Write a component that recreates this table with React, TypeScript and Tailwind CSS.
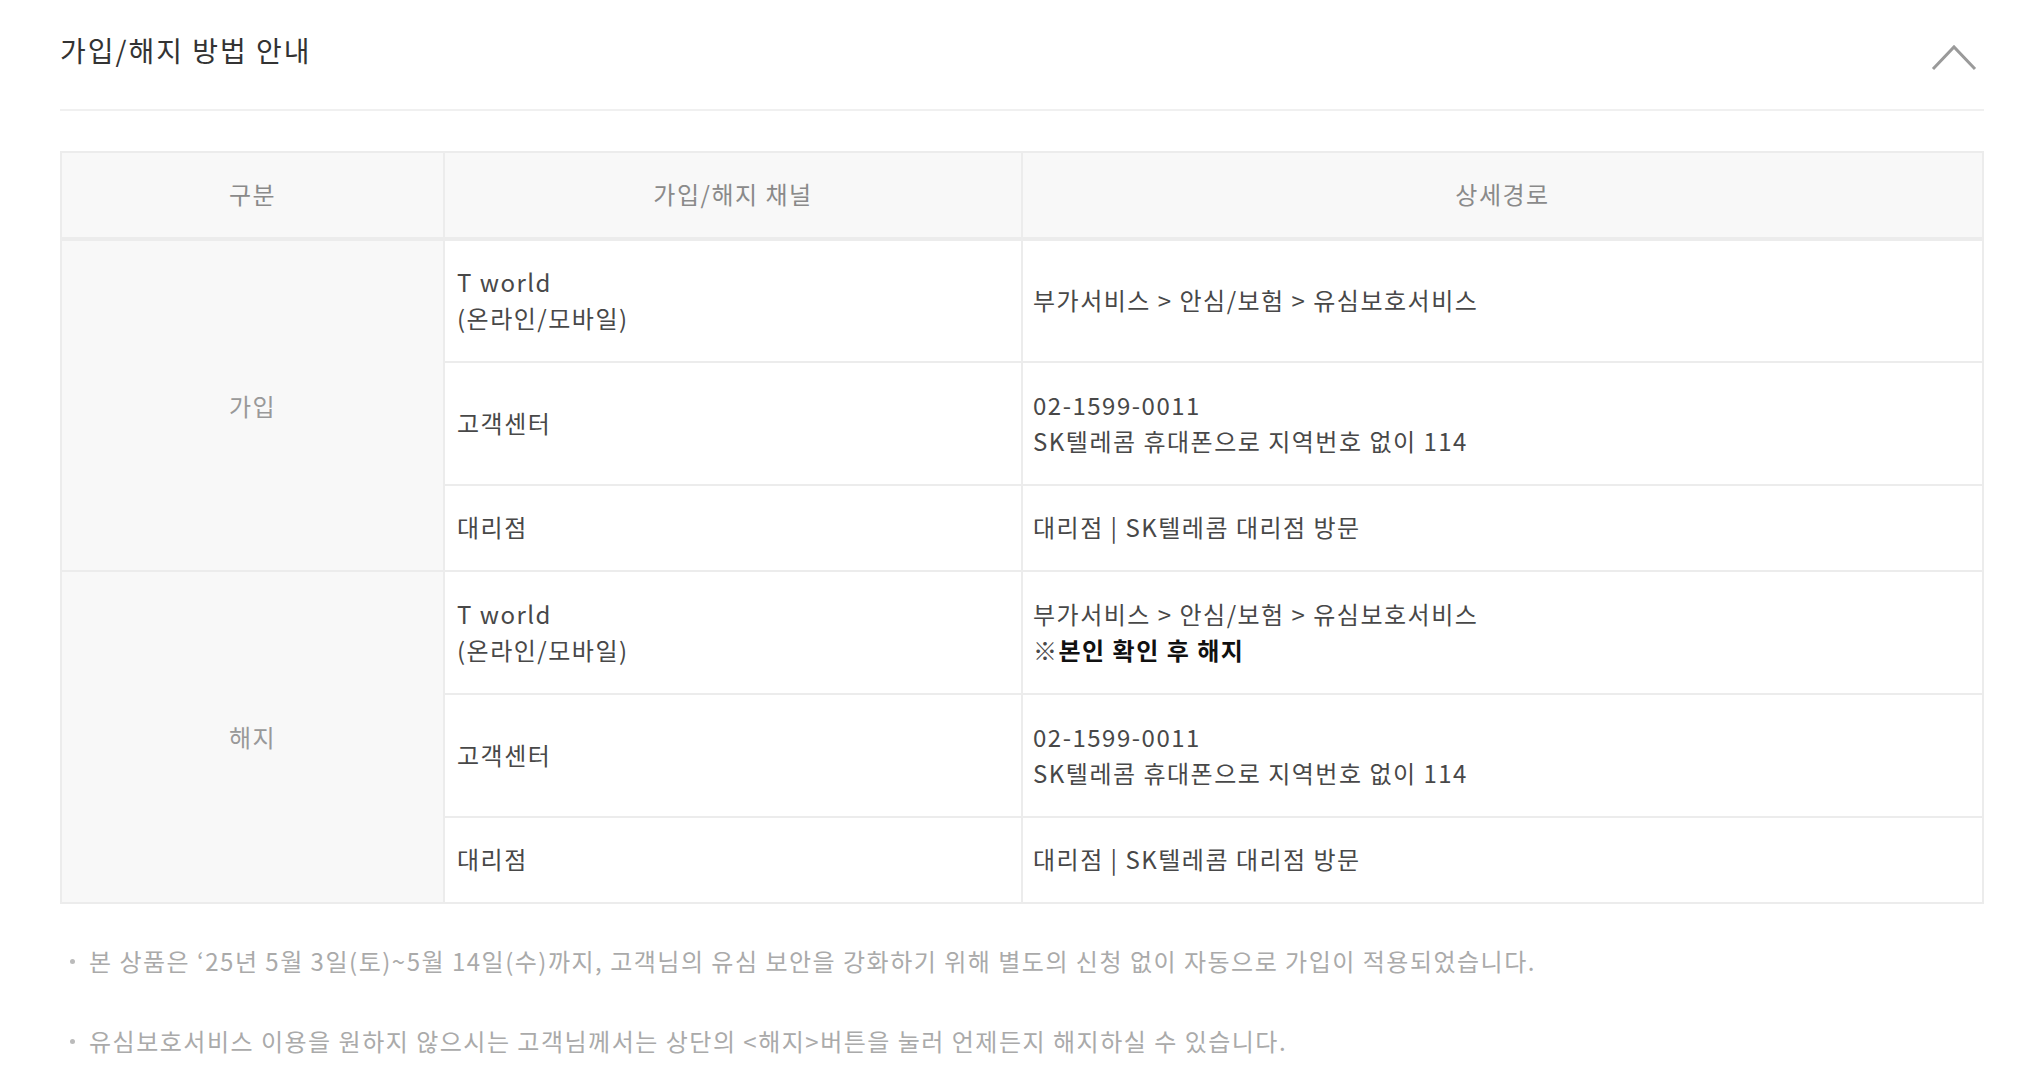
import React from "react";

type Row = {
  channel: string[];
  path: React.ReactNode[];
};

const GROUPS: { label: string; rows: Row[] }[] = [
  {
    label: "가입",
    rows: [
      { channel: ["T world", "(온라인/모바일)"], path: ["부가서비스 > 안심/보험 > 유심보호서비스"] },
      { channel: ["고객센터"], path: ["02-1599-0011", "SK텔레콤 휴대폰으로 지역번호 없이 114"] },
      { channel: ["대리점"], path: ["대리점 | SK텔레콤 대리점 방문"] },
    ],
  },
  {
    label: "해지",
    rows: [
      {
        channel: ["T world", "(온라인/모바일)"],
        path: [
          "부가서비스 > 안심/보험 > 유심보호서비스",
          <>
            ※<b className="font-bold text-[#111]">본인 확인 후 해지</b>
          </>,
        ],
      },
      { channel: ["고객센터"], path: ["02-1599-0011", "SK텔레콤 휴대폰으로 지역번호 없이 114"] },
      { channel: ["대리점"], path: ["대리점 | SK텔레콤 대리점 방문"] },
    ],
  },
];

const NOTES = [
  "본 상품은 ‘25년 5월 3일(토)~5월 14일(수)까지, 고객님의 유심 보안을 강화하기 위해 별도의 신청 없이 자동으로 가입이 적용되었습니다.",
  "유심보호서비스 이용을 원하지 않으시는 고객님께서는 상단의 <해지>버튼을 눌러 언제든지 해지하실 수 있습니다.",
];

export default function App() {
  return (
    <div
      className="min-h-[1080px] bg-white pl-[60px] text-[#484848]"
      style={{ fontFamily: '"Noto Sans CJK KR", "Noto Sans", sans-serif' }}
    >
      <div className="w-[1924px]">
        {/* header */}
        <div className="flex h-[111px] items-start justify-between border-b-2 border-[#f0f0f0]">
          <h2 className="pt-[32px] text-[28px] leading-[36px] font-normal tracking-[2px] text-[#333]">
            가입/해지 방법 안내
          </h2>
          <svg width="48" height="30" viewBox="0 0 48 30" className="mt-[44px] mr-[6px]">
            <path d="M3 25 L24 3 L45 25" fill="none" stroke="#9a9a9a" strokeWidth="3" />
          </svg>
        </div>

        {/* table */}
        <table className="mt-[40px] w-full border-collapse border-2 border-[#ececec] text-[24px] leading-[36px] tracking-[1.5px]">
          <colgroup>
            <col className="w-[383px]" />
            <col className="w-[578px]" />
            <col />
          </colgroup>
          <thead>
            <tr className="h-[87px] bg-[#f8f8f8] text-[#8a8a8a]">
              <th className="border-2 border-b-4 border-[#ececec] pb-[3px] font-normal">구분</th>
              <th className="border-2 border-b-4 border-[#ececec] pb-[3px] font-normal">가입/해지 채널</th>
              <th className="border-2 border-b-4 border-[#ececec] pb-[3px] font-normal">상세경로</th>
            </tr>
          </thead>
          <tbody>
            {GROUPS.map((group) =>
              group.rows.map((row, i) => (
                <tr key={group.label + i} className={row.channel.length > 1 || row.path.length > 1 ? "h-[123px]" : "h-[86px]"}>
                  {i === 0 && (
                    <td
                      rowSpan={group.rows.length}
                      className="border-2 border-[#ececec] bg-[#f8f8f8] text-center align-middle text-[#999]"
                    >
                      {group.label}
                    </td>
                  )}
                  <td className="border-2 border-[#ececec] px-[12px] pb-[2px] align-middle">
                    {row.channel.map((line) => (
                      <div key={line}>{line}</div>
                    ))}
                  </td>
                  <td className="border-2 border-[#ececec] px-[10px] pb-[2px] align-middle">
                    {row.path.map((line, j) => (
                      <div key={j}>{line}</div>
                    ))}
                  </td>
                </tr>
              ))
            )}
          </tbody>
        </table>

        {/* notes */}
        <ul className="mt-[39px] flex flex-col gap-[44px] text-[24px] leading-[36px] tracking-[1.5px] text-[#aaa]">
          {NOTES.map((note) => (
            <li key={note} className="flex items-center">
              <span className="mr-[14px] ml-[10px] h-[5px] w-[5px] shrink-0 rounded-full bg-[#bbb]" />
              {note}
            </li>
          ))}
        </ul>
      </div>
    </div>
  );
}
